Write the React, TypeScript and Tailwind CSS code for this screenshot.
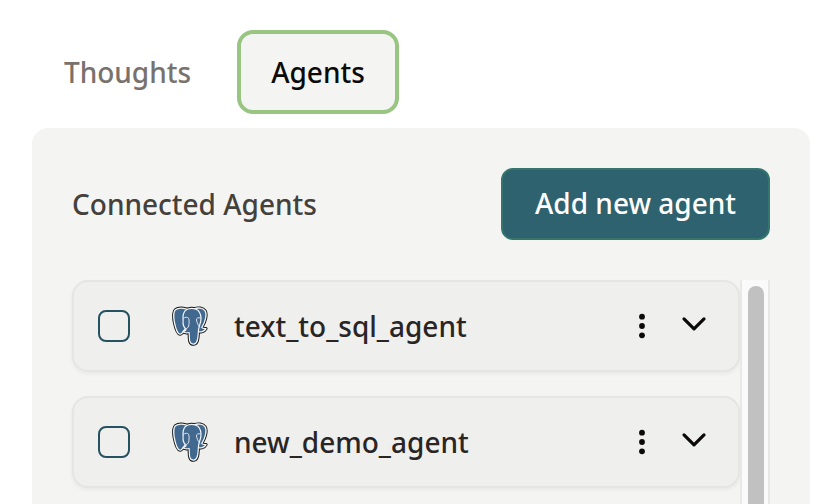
const agents = ["text_to_sql_agent", "new_demo_agent"];

function PostgresLogo() {
  const left =
    "M14.5 3C10.5 1.8 6 1.7 3.4 3.8C1.2 6 1.4 10.5 2.2 15.5C3.2 20.5 5.2 28 8 28.2C9.8 28.3 11.5 25 13.5 22.5L17 12Z";
  const right =
    "M22 2.8C26 1.4 31 1.8 33.1 4.8C35.2 8.2 33.6 15.5 29.8 21.4C30.3 22.6 32 22.5 34 22.6C32.6 25.4 28.6 26.6 25.4 25.6Z";
  const trunk =
    "M13.2 4.6C16 2 22.5 1.5 26 4.4C28.6 7 29.4 10.5 28.8 15C28 18.5 26.8 21 26.5 24C26 29 26.6 38 21.8 38.2C16.6 38.4 17.4 32 17.2 26.5C15 27.2 11.8 26.8 11 25.4C12.8 25 14.3 24.3 14 22.8C10.9 21.2 10.8 18 11.1 14.5C10.7 10.5 11.2 7 13.2 4.6Z";
  return (
    <svg width="36" height="40" viewBox="0 0 36 40" fill="none" strokeLinejoin="round" strokeLinecap="round">
      <g stroke="#161616" strokeWidth="3.2">
        <path d={left} />
        <path d={right} />
        <path d={trunk} />
      </g>
      <g stroke="#f4f6f8" strokeWidth="1.3">
        <path d={left} fill="#41688f" />
        <path d={right} fill="#41688f" />
      </g>
      <path d={trunk} fill="#41688f" stroke="#f4f6f8" strokeWidth="1.2" />
      <g stroke="#dce3ea" strokeWidth="1">
        <path d="M11.2 12.4C13 11 15.8 10.8 16.6 12.2C17.5 14 17 18 16.7 20C16.2 21.6 15 22.4 14 22.8" />
        <path d="M28.8 12C26 11.3 24.2 12 24.5 14C24.9 16.5 26 19 27.6 21.2" />
      </g>
    </svg>
  );
}

function AgentCard({ name }: { name: string }) {
  return (
    <div className="flex h-[92px] shrink-0 items-center rounded-2xl border-2 border-[#e5e5e4] bg-[#efefee] pl-6 pr-[30px] shadow-[0_2px_4px_rgba(0,0,0,0.05)]">
      <button aria-label="Select" className="size-8 rounded-lg border-2 border-[#245260]" />
      <div className="ml-[42px] mr-[26px]">
        <PostgresLogo />
      </div>
      <span className="flex-1 text-[28px] leading-10 font-medium text-[#292524]">{name}</span>
      <svg width="8" height="26" viewBox="0 0 8 26" fill="#0c0a09" className="mr-[34px]">
        <circle cx="4" cy="3.7" r="2.9" />
        <circle cx="4" cy="13" r="2.9" />
        <circle cx="4" cy="22.3" r="2.9" />
      </svg>
      <svg
        width="28"
        height="20"
        viewBox="0 0 28 20"
        fill="none"
        stroke="#0c0a09"
        strokeWidth="3.2"
        strokeLinecap="round"
        strokeLinejoin="round"
      >
        <path d="M4 2.9L14 12.9L24 2.9" />
      </svg>
    </div>
  );
}

export default function App() {
  return (
    <div className="flex h-[504px] w-[836px] flex-col overflow-hidden bg-white pl-8 pr-[26px] pt-[30px] font-['Noto_Sans',sans-serif] text-[28px] leading-10 font-medium">
      <nav className="mb-3.5 flex h-[84px] shrink-0">
        <button className="w-[191px] text-[#78716c]">Thoughts</button>
        <button className="ml-3.5 w-[162px] rounded-2xl border-4 border-[#99c582] bg-[#f4f4f3] text-[#0c0a09]">
          Agents
        </button>
      </nav>
      <main className="flex h-[500px] shrink-0 flex-col rounded-2xl bg-[#f4f4f3] px-10 pt-10">
        <header className="mb-10 flex h-[72px] items-center justify-between">
          <h1 className="text-[#44403c]">Connected Agents</h1>
          <button className="h-[72px] w-[269px] rounded-xl border-2 border-[#34756d] bg-[#2f626f] pb-0.5 text-white">
            Add new agent
          </button>
        </header>
        <div className="flex h-[300px]">
          <div className="flex w-[668px] flex-col gap-6">
            {agents.map((name) => (
              <AgentCard key={name} name={name} />
            ))}
          </div>
          <div className="w-[30px] border-x-2 border-[#e8e8e8] bg-[#fafafa] px-1.5 pt-1.5">
            <div className="h-[290px] w-4 rounded-full bg-[#c1c1c1]" />
          </div>
        </div>
      </main>
    </div>
  );
}
